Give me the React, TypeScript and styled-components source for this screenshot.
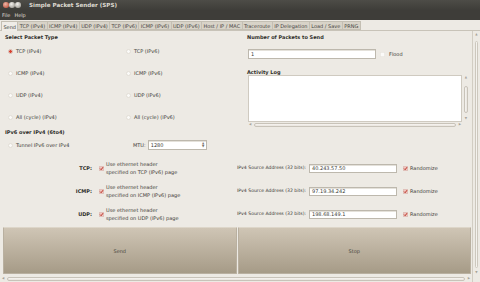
import React from 'react';
import styled, { createGlobalStyle } from 'styled-components';

const Global = createGlobalStyle`
  html, body { margin: 0; padding: 0; background: #edeae4; }
  body { font-family: "DejaVu Sans", "Liberation Sans", sans-serif; }
  * { box-sizing: border-box; }
`;

const Window = styled.div`
  width: 480px;
  height: 282px;
  display: flex;
  flex-direction: column;
  overflow: hidden;
  background: #edeae4;
  color: #3c3b37;
  font-size: 5px;
  line-height: 1.2;
`;

const TitleBar = styled.div`
  height: 10px;
  display: flex;
  align-items: center;
  padding-left: 3px;
  background: linear-gradient(#4d4c47, #3e3d39);
`;

const WinButton = styled.span<{ $close?: boolean }>`
  width: 5.5px;
  height: 5.5px;
  border-radius: 50%;
  margin-right: 0.5px;
  background: ${p =>
    p.$close
      ? 'radial-gradient(circle at 40% 35%, #f0b8a8, #c4624e 70%)'
      : 'radial-gradient(circle at 40% 35%, #f4f2ee, #a9a69f 70%)'};
`;

const Title = styled.span`
  margin-left: 8px;
  font-size: 5.6px;
  font-weight: bold;
  color: #dfdbd2;
`;

const MenuBar = styled.div`
  height: 10px;
  display: flex;
  align-items: center;
  gap: 4px;
  padding-left: 2px;
  background: #3e3d39;
  color: #dfdbd2;
`;

const TabBar = styled.div`
  height: 11px;
  display: flex;
  align-items: flex-end;
  padding-left: 1px;
  border-bottom: 1px solid #c8c3b8;
`;

const Tab = styled.div<{ $active?: boolean }>`
  height: ${p => (p.$active ? 10 : 9)}px;
  display: flex;
  align-items: center;
  padding: 0 1.4px;
  margin-bottom: ${p => (p.$active ? -1 : 0)}px;
  background: ${p => (p.$active ? '#efece7' : '#d8d3c8')};
  border: 1px solid #c4bfb3;
  border-bottom: ${p => (p.$active ? 'none' : '1px solid #c4bfb3')};
  border-left: ${p => (p.$active ? '1px solid #c4bfb3' : 'none')};
  color: #45433e;
  white-space: nowrap;
`;

const Body = styled.div`
  flex: 1;
  display: flex;
  min-height: 0;
`;

const Main = styled.div`
  flex: 1;
  display: flex;
  flex-direction: column;
  border-right: 1px solid #d2cdc3;
`;

const Content = styled.div`
  flex: 1;
  display: flex;
  flex-direction: column;
`;

const Top = styled.div`
  display: grid;
  grid-template-columns: 238px 1fr;
`;

const Column = styled.div`
  display: flex;
  flex-direction: column;
  padding-top: 2px;
`;

const Header = styled.div<{ $indent?: number }>`
  height: 7px;
  display: flex;
  align-items: center;
  padding-left: ${p => p.$indent ?? 5}px;
  font-weight: bold;
  color: #2f2e2a;
  white-space: nowrap;
`;

const RadioGrid = styled.div`
  display: grid;
  grid-template-columns: 118px 1fr;
  grid-auto-rows: 22px;
  padding-left: 8px;
`;

const Choice = styled.label<{ $width?: number }>`
  display: flex;
  align-items: center;
  gap: 3px;
  white-space: nowrap;
  ${p => (p.$width ? `width: ${p.$width}px;` : '')}
`;

const Dot = styled.span<{ $on?: boolean }>`
  width: 5px;
  height: 5px;
  border-radius: 50%;
  flex: none;
  background: ${p =>
    p.$on ? 'radial-gradient(circle, #d9412d 0 1.3px, #fbf9f6 1.6px)' : '#fbfaf8'};
  border: 0.5px solid ${p => (p.$on ? '#d7b7ae' : '#e2ded6')};
`;

const Field = styled.div<{ $width: number }>`
  width: ${p => p.$width}px;
  height: 10px;
  flex: none;
  display: flex;
  align-items: center;
  padding-left: 2px;
  background: #ffffff;
  border: 1px solid #bdb8ad;
  box-shadow: inset 0 1px 0 #e4e1da;
  color: #3a3935;
  position: relative;
`;

const PacketsRow = styled.div`
  display: flex;
  align-items: center;
  margin-top: 9px;
  padding-left: 10px;
  gap: 4px;
`;

const LogHeader = styled(Header)`
  height: 6px;
  margin-top: 10px;
`;

const LogBox = styled.div`
  margin-left: 10px;
  width: 222px;
  height: 53px;
  display: grid;
  grid-template-columns: 1fr 8px;
  grid-template-rows: 1fr 6px;
`;

const LogArea = styled.div`
  background: #ffffff;
  border: 1px solid #cfcac0;
`;

const VTrack = styled.div`
  display: flex;
  flex-direction: column;
  align-items: center;
  justify-content: space-between;
  padding: 1px 0;
  color: #a7a298;
  font-size: 3px;
`;

const VThumb = styled.div`
  width: 4px;
  flex: 1;
  margin: 6px 0 4px;
  border: 1px solid #c8c3b9;
  border-radius: 2px;
  background: linear-gradient(90deg, #f7f5f2, #e8e4dd);
`;

const HTrack = styled.div`
  display: flex;
  align-items: center;
  gap: 3px;
  padding: 0 1px;
  color: #a7a298;
  font-size: 3px;
`;

const HThumb = styled.div`
  flex: 1;
  height: 4px;
  border: 1px solid #c8c3b9;
  border-radius: 2px;
  background: linear-gradient(#f7f5f2, #e8e4dd);
`;

const Section = styled.div`
  display: flex;
  flex-direction: column;
`;

const TunnelRow = styled.div`
  height: 18px;
  display: flex;
  align-items: center;
  padding-left: 8px;
`;

const SpinArrows = styled.span`
  position: absolute;
  right: 0;
  top: 0;
  bottom: 0;
  width: 5px;
  display: flex;
  flex-direction: column;
  align-items: center;
  justify-content: center;
  font-size: 3px;
  line-height: 3px;
  color: #77736b;
`;

const ProtoRows = styled.div`
  display: flex;
  flex-direction: column;
  margin-top: 2.5px;
`;

const ProtoRow = styled.div`
  height: 23px;
  display: flex;
  align-items: center;
`;

const ProtoLabel = styled.span`
  width: 92px;
  text-align: right;
  font-weight: bold;
  color: #2f2e2a;
`;

const Note = styled.span`
  width: 131px;
  margin-left: 2px;
  line-height: 8px;
`;

const AddrLabel = styled.span`
  width: 72px;
  flex: none;
  font-size: 4.6px;
  white-space: nowrap;
  overflow: hidden;
`;

const Randomize = styled.span`
  margin-left: 2px;
`;

const BoxWrap = styled.span<{ $ml?: number }>`
  display: flex;
  margin-left: ${p => p.$ml ?? 0}px;
`;

const Buttons = styled.div`
  height: 47px;
  display: flex;
  gap: 1px;
  margin-top: 1.5px;
  padding: 0 1px 0 3px;
`;

const BigButton = styled.button`
  flex: 1;
  border: 1px solid #b9b0a0;
  border-top-color: #ddd6c9;
  border-radius: 1px;
  background: linear-gradient(#cfc5b5, #a69b87);
  font-family: inherit;
  font-size: 5px;
  color: #4a4740;
  padding: 0;
`;

const OuterV = styled.div`
  width: 7px;
  display: flex;
  flex-direction: column;
`;

const OuterVTrack = styled(VTrack)`
  flex: 1;
  padding: 2px 0 0;
`;

const OuterVThumb = styled.div`
  width: 3px;
  flex: 1;
  margin: 4px 0 3px;
  border: 1px solid #cdc8be;
  border-radius: 1.5px;
  background: #f4f2ee;
`;

const Corner = styled.div`
  height: 7px;
`;

const OuterH = styled(HTrack)`
  height: 7px;
  padding: 0 2px;
`;

const CheckBox = ({ on }: { on?: boolean }) => (
  <svg width="5" height="5" viewBox="0 0 10 10">
    <rect
      x="0.5"
      y="0.5"
      width="9"
      height="9"
      rx="1"
      fill={on ? '#f1c7c1' : '#fbfaf8'}
      stroke={on ? '#caa39b' : '#dcd8d0'}
    />
    {on && <path d="M2.2 5.2 L4.3 7.4 L8 2.4" fill="none" stroke="#b5281b" strokeWidth="1.9" />}
  </svg>
);

const tabs = [
  'Send',
  'TCP (IPv4)',
  'ICMP (IPv4)',
  'UDP (IPv4)',
  'TCP (IPv6)',
  'ICMP (IPv6)',
  'UDP (IPv6)',
  'Host / IP / MAC',
  'Traceroute',
  'IP Delegation',
  'Load / Save',
  'PRNG'
];

const packetTypes = [
  ['TCP (IPv4)', 'TCP (IPv6)'],
  ['ICMP (IPv4)', 'ICMP (IPv6)'],
  ['UDP (IPv4)', 'UDP (IPv6)'],
  ['All (cycle) (IPv4)', 'All (cycle) (IPv6)']
];

const protocols = [
  { name: 'TCP', addr: '40.243.57.50' },
  { name: 'ICMP', addr: '97.19.34.242' },
  { name: 'UDP', addr: '198.68.149.1' }
];

export default function App() {
  return (
    <Window>
      <Global />
      <TitleBar>
        <WinButton $close />
        <WinButton />
        <WinButton />
        <Title>Simple Packet Sender (SPS)</Title>
      </TitleBar>
      <MenuBar>
        <span>File</span>
        <span>Help</span>
      </MenuBar>
      <TabBar>
        {tabs.map((t, i) => (
          <Tab key={t} $active={i == 0}>
            {t}
          </Tab>
        ))}
      </TabBar>
      <Body>
        <Main>
          <Content>
            <Top>
              <Column>
                <Header>Select Packet Type</Header>
                <RadioGrid>
                  {packetTypes.flat().map((t, i) => (
                    <Choice key={t}>
                      <Dot $on={i == 0} />
                      {t}
                    </Choice>
                  ))}
                </RadioGrid>
              </Column>
              <Column>
                <Header $indent={9}>Number of Packets to Send</Header>
                <PacketsRow>
                  <Field $width={128}>1</Field>
                  <CheckBox />
                  <span>Flood</span>
                </PacketsRow>
                <LogHeader $indent={9}>Activity Log</LogHeader>
                <LogBox>
                  <LogArea />
                  <VTrack>
                    <span>▲</span>
                    <VThumb />
                    <span>▼</span>
                  </VTrack>
                  <HTrack>
                    <span>◀</span>
                    <HThumb />
                    <span>▶</span>
                  </HTrack>
                </LogBox>
              </Column>
            </Top>
            <Section>
              <Header style={{ height: 8 }}>IPv6 over IPv4 (6to4)</Header>
              <TunnelRow>
                <Choice $width={125}>
                  <Dot />
                  Tunnel IPv6 over IPv4
                </Choice>
                <span>MTU:</span>
                <Field $width={59} style={{ marginLeft: 2 }}>
                  1280
                  <SpinArrows>
                    <span>▲</span>
                    <span>▼</span>
                  </SpinArrows>
                </Field>
              </TunnelRow>
              <ProtoRows>
                {protocols.map(p => (
                  <ProtoRow key={p.name}>
                    <ProtoLabel>{p.name}:</ProtoLabel>
                    <BoxWrap $ml={7}>
                      <CheckBox on />
                    </BoxWrap>
                    <Note>
                      Use ethernet header
                      <br />
                      specified on {p.name} (IPv6) page
                    </Note>
                    <AddrLabel>IPv4 Source Address (32 bits):</AddrLabel>
                    <Field $width={88} style={{ height: 9 }}>
                      {p.addr}
                    </Field>
                    <BoxWrap $ml={6}>
                      <CheckBox on />
                    </BoxWrap>
                    <Randomize>Randomize</Randomize>
                  </ProtoRow>
                ))}
              </ProtoRows>
            </Section>
            <Buttons>
              <BigButton>Send</BigButton>
              <BigButton>Stop</BigButton>
            </Buttons>
          </Content>
          <OuterH>
            <span>◀</span>
            <HThumb />
            <span>▶</span>
          </OuterH>
        </Main>
        <OuterV>
          <OuterVTrack>
            <span>▲</span>
            <OuterVThumb />
            <span>▼</span>
          </OuterVTrack>
          <Corner />
        </OuterV>
      </Body>
    </Window>
  );
}
